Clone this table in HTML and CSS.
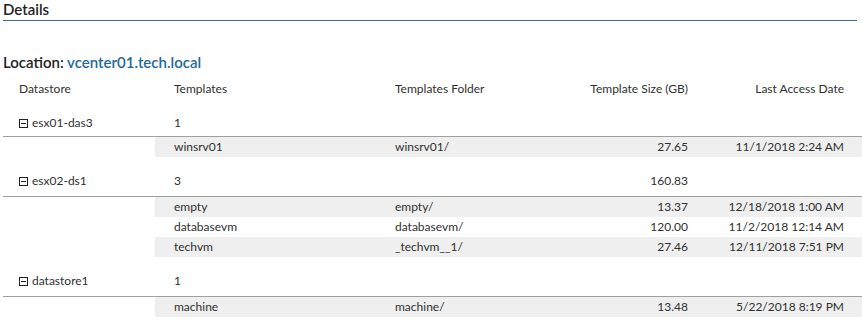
FILE: index.html
```html
<!DOCTYPE html>
<html>
<head>
<meta charset="utf-8">
<link rel="stylesheet" href="styles.css">
</head>
<body>
<div class="page">
  <h1 class="title">Details</h1>
  <h2 class="location">Location: <span class="loc-name">vcenter01.tech.local</span></h2>
  <div class="table">
    <div class="row head">
      <div class="cell">Datastore</div>
      <div class="cell">Templates</div>
      <div class="cell">Templates Folder</div>
      <div class="cell num">Template Size (GB)</div>
      <div class="cell num last">Last Access Date</div>
    </div>

    <div class="group first">
      <div class="row grow">
        <div class="cell ds"><svg class="tog" width="9" height="9" viewBox="0 0 9 9"><rect x="0.5" y="0.5" width="8" height="8" fill="none" stroke="#222"/><line x1="2" y1="4.5" x2="7" y2="4.5" stroke="#222"/></svg>esx01-das3</div>
        <div class="cell">1</div>
        <div class="cell"></div>
        <div class="cell num"></div>
        <div class="cell num last"></div>
      </div>
      <div class="row child alt">
        <div class="cell blank"></div>
        <div class="cell">winsrv01</div>
        <div class="cell">winsrv01/</div>
        <div class="cell num">27.65</div>
        <div class="cell num last">11/1/2018 2:24 AM</div>
      </div>
    </div>

    <div class="group">
      <div class="row grow">
        <div class="cell ds"><svg class="tog" width="9" height="9" viewBox="0 0 9 9"><rect x="0.5" y="0.5" width="8" height="8" fill="none" stroke="#222"/><line x1="2" y1="4.5" x2="7" y2="4.5" stroke="#222"/></svg>esx02-ds1</div>
        <div class="cell">3</div>
        <div class="cell"></div>
        <div class="cell num">160.83</div>
        <div class="cell num last"></div>
      </div>
      <div class="row child alt">
        <div class="cell blank"></div>
        <div class="cell">empty</div>
        <div class="cell">empty/</div>
        <div class="cell num">13.37</div>
        <div class="cell num last">12/18/2018 1:00 AM</div>
      </div>
      <div class="row child">
        <div class="cell blank"></div>
        <div class="cell">databasevm</div>
        <div class="cell">databasevm/</div>
        <div class="cell num">120.00</div>
        <div class="cell num last">11/2/2018 12:14 AM</div>
      </div>
      <div class="row child alt">
        <div class="cell blank"></div>
        <div class="cell">techvm</div>
        <div class="cell">_techvm__1/</div>
        <div class="cell num">27.46</div>
        <div class="cell num last">12/11/2018 7:51 PM</div>
      </div>
    </div>

    <div class="group">
      <div class="row grow">
        <div class="cell ds"><svg class="tog" width="9" height="9" viewBox="0 0 9 9"><rect x="0.5" y="0.5" width="8" height="8" fill="none" stroke="#222"/><line x1="2" y1="4.5" x2="7" y2="4.5" stroke="#222"/></svg>datastore1</div>
        <div class="cell">1</div>
        <div class="cell"></div>
        <div class="cell num"></div>
        <div class="cell num last"></div>
      </div>
      <div class="row child alt">
        <div class="cell blank"></div>
        <div class="cell">machine</div>
        <div class="cell">machine/</div>
        <div class="cell num">13.48</div>
        <div class="cell num last">5/22/2018 8:19 PM</div>
      </div>
    </div>
  </div>
</div>
</body>
</html>
```
FILE: styles.css
```css
html, body {
  margin: 0;
  padding: 0;
  background: #fff;
}
body {
  font-family: "Segoe UI", Lato, "Liberation Sans", sans-serif;
  color: #303030;
  font-size: 12px;
}
.page {
  padding-left: 3px;
}
.title {
  margin: 0 5px 0 0;
  font-size: 15px;
  font-weight: 600;
  line-height: 18px;
  height: 21px;
  box-sizing: border-box;
  border-bottom: 1px solid #3e6d8c;
  color: #222;
}
.location {
  margin: 31px 0 0 0;
  font-size: 15px;
  font-weight: 600;
  line-height: 20px;
  color: #222;
}
.loc-name {
  color: #1e6a99;
}
.table {
  margin-top: 7px;
}
.row {
  display: grid;
  grid-template-columns: 152px 221px 200px 131px 1fr;
  line-height: 20px;
}
.cell {
  padding-left: 19px;
  white-space: nowrap;
}
.cell.num {
  text-align: right;
  padding-left: 0;
  padding-right: 19px;
}
.cell.last {
  padding-right: 18px;
}
.head .cell:first-child {
  padding-left: 16px;
}
.grow {
  padding-top: 14px;
  padding-bottom: 5px;
  border-bottom: 1px solid #a0a0a0;
}
.group.first .grow {
  padding-bottom: 3px;
}
.ds {
  padding-left: 16px;
  display: flex;
  align-items: center;
  gap: 4px;
}
.tog {
  display: block;
  flex: none;
}
.child {
  height: 20px;
}
.child.alt .cell:not(.blank) {
  background: #efefef;
}
```
